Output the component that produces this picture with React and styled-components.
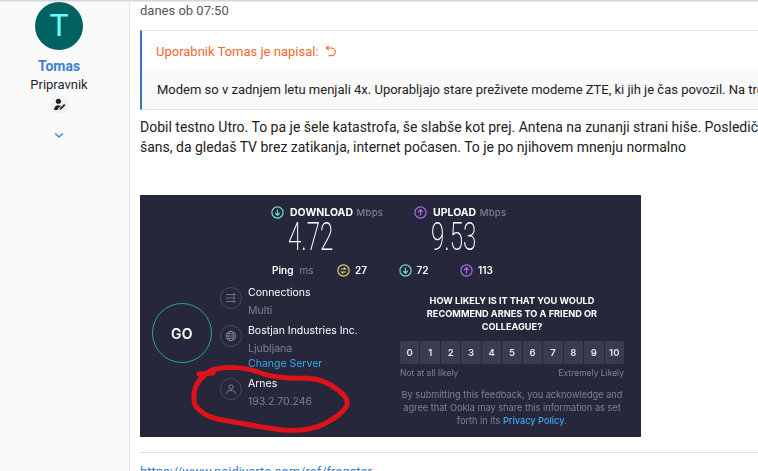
import React from "react";
import styled, { createGlobalStyle } from "styled-components";

const Global = createGlobalStyle`
  html, body {
    margin: 0;
    padding: 0;
    height: 100%;
    overflow: hidden;
    background: #fff;
  }
  body {
    font-family: Roboto, "Liberation Sans", sans-serif;
    font-size: 14px;
    color: #222;
  }
`;

const Page = styled.div`
  display: flex;
  width: 758px;
  height: 471px;
  overflow: hidden;
  position: relative;
  &::before {
    content: "";
    position: absolute;
    left: 0;
    right: 0;
    top: 0;
    height: 2px;
    background: linear-gradient(#cfcfcf, #f1f1f1);
    z-index: 2;
  }
`;

const Sidebar = styled.aside`
  flex: 0 0 130px;
  box-sizing: border-box;
  height: 100%;
  background: #fafafa;
  border-right: 1px solid #e0e0e0;
  display: flex;
  flex-direction: column;
  align-items: center;
  padding: 2px 11px 0 0;
`;

const Avatar = styled.div`
  width: 48px;
  height: 48px;
  border-radius: 50%;
  background: #006161;
  color: #66ffff;
  font-size: 32px;
  line-height: 47px;
  text-align: center;
  margin-bottom: 6px;
`;

const Name = styled.div`
  color: #3f7fce;
  font-weight: 700;
  font-size: 14px;
  line-height: 20px;
`;

const Rank = styled.div`
  font-size: 13px;
  line-height: 18px;
  color: #1f2430;
`;

const Badge = styled.div`
  width: 19px;
  height: 19px;
  margin-top: 1px;
  border-radius: 50%;
  background: #f1f1f1;
  display: flex;
  align-items: center;
  justify-content: center;
`;

const Chevron = styled.svg`
  margin-top: 18px;
`;

const Post = styled.main`
  flex: 1;
  min-width: 0;
  padding: 0 0 0 10px;
  overflow: hidden;
`;

const Stamp = styled.div`
  color: #555;
  font-size: 13px;
  line-height: 21px;
  height: 30px;
`;

const Quote = styled.blockquote`
  margin: 0;
  box-sizing: border-box;
  height: 80px;
  border-left: 2px solid #2f74c0;
  border-top: 1px solid #e3e3e3;
  border-bottom: 1px solid #e0e0e0;
`;

const QuoteHead = styled.div`
  display: flex;
  align-items: center;
  gap: 6px;
  height: 40px;
  padding-left: 14px;
  color: #f4682c;
  font-size: 13px;
`;

const QuoteBody = styled.div`
  height: 38px;
  line-height: 37px;
  padding-left: 15px;
  background: #f9f9f9;
  white-space: nowrap;
  font-size: 13px;
  color: #222;
`;

const Body = styled.div`
  margin-top: 7px;
  line-height: 20px;
  white-space: nowrap;
  color: #222;
`;

const Panel = styled.div`
  position: relative;
  width: 501px;
  height: 242px;
  margin-top: 38px;
  background: #26273b;
  color: #fff;
  font-family: Inter, "Open Sans", sans-serif;
  overflow: hidden;
  filter: blur(0.3px);
`;

const Speeds = styled.div`
  display: grid;
  grid-template-columns: 143px 143px;
  padding: 11px 0 0 131px;
`;

const SpeedHead = styled.div`
  display: flex;
  align-items: center;
  gap: 6px;
  font-size: 10.5px;
  font-weight: 700;
  line-height: 13px;
  white-space: nowrap;
`;

const Unit = styled.span`
  color: #7f8095;
  font-size: 9.5px;
  font-weight: 500;
  letter-spacing: 0.3px;
  margin-left: 1px;
`;

const SpeedValue = styled.div`
  font-family: Roboto, sans-serif;
  font-weight: 200;
  font-size: 39px;
  line-height: 38px;
  margin: -1px 0 0 17px;
  width: 48px;
  transform: scaleX(0.62);
  transform-origin: left center;
`;

const PingRow = styled.div`
  display: flex;
  align-items: center;
  height: 14px;
  margin-top: 7px;
  padding-left: 132px;
  font-size: 10px;
  font-weight: 600;
`;

const PingLabel = styled.span`
  width: 65px;
  white-space: nowrap;
  & > i {
    font-style: normal;
    font-weight: 400;
    color: #7f8095;
    margin-left: 6px;
  }
`;

const PingItem = styled.span`
  display: flex;
  align-items: center;
  gap: 5px;
  width: 61.5px;
`;

const Lower = styled.div`
  display: flex;
  margin-top: 7px;
`;

const GoCol = styled.div`
  flex: 0 0 80px;
  padding: 19px 0 0 12px;
  box-sizing: border-box;
`;

const GoButton = styled.div`
  width: 60px;
  height: 60px;
  box-sizing: border-box;
  border-radius: 50%;
  border: 1px solid #2f9dab;
  display: flex;
  align-items: center;
  justify-content: center;
  font-size: 14px;
  font-weight: 600;
  letter-spacing: 0.3px;
`;

const ServerCol = styled.div`
  flex: 0 0 180px;
  font-size: 10.5px;
`;

const ServerRow = styled.div`
  display: flex;
  gap: 6px;
  margin-bottom: ${(p) => p.$gap}px;
`;

const IconRing = styled.div`
  flex: 0 0 22px;
  width: 22px;
  height: 22px;
  margin-top: 3px;
  box-sizing: border-box;
  border: 1px solid #4a4b60;
  border-radius: 50%;
  display: flex;
  align-items: center;
  justify-content: center;
`;

const ServerLine = styled.div`
  line-height: ${(p) => p.$lh || 18}px;
  color: ${(p) => p.$color || "#fff"};
  white-space: nowrap;
`;

const SurveyCol = styled.div`
  width: 224px;
  padding-top: 10px;
  text-align: center;
`;

const Question = styled.div`
  font-size: 9.2px;
  font-weight: 700;
  line-height: 13px;
  white-space: nowrap;
`;

const Scores = styled.div`
  display: grid;
  grid-template-columns: repeat(11, 1fr);
  gap: 1px;
  margin-top: 8px;
`;

const Score = styled.div`
  height: 23px;
  line-height: 23px;
  background: #3a3b4e;
  font-size: 9.5px;
  font-weight: 600;
  color: #e8e8ee;
  &:first-child {
    border-radius: 2px 0 0 2px;
  }
  &:last-child {
    border-radius: 0 2px 2px 0;
  }
`;

const ScaleLabels = styled.div`
  display: flex;
  justify-content: space-between;
  margin-top: 4px;
  font-size: 8.5px;
  line-height: 10px;
  color: #7f8095;
`;

const Disclaimer = styled.div`
  margin-top: 10px;
  font-size: 9.2px;
  line-height: 13px;
  color: #7f8095;
  white-space: nowrap;
  & > a {
    color: #3ba7ec;
    font-weight: 500;
  }
`;

const Scribble = styled.svg`
  position: absolute;
  left: 0;
  top: 0;
  pointer-events: none;
`;

const Rule = styled.hr`
  border: 0;
  border-top: 1px solid #e0e0e0;
  margin: 15px 0 0;
`;

const Signature = styled.a`
  display: block;
  margin-top: 9px;
  line-height: 20px;
  font-size: 13px;
  color: #3f7fce;
  text-decoration: underline;
`;

const Arrow = ({ color, up }) => (
  <svg width="13" height="13" viewBox="0 0 13 13" fill="none" stroke={color} strokeWidth="1.2">
    <circle cx="6.5" cy="6.5" r="5.6" />
    {up ? <path d="M6.5 9.5V3.8M4.2 6l2.3-2.3L8.8 6" /> : <path d="M6.5 3.5v5.7M4.2 7l2.3 2.3L8.8 7" />}
  </svg>
);

const Latency = () => (
  <svg width="13" height="13" viewBox="0 0 13 13" fill="none" stroke="#e3cf6a" strokeWidth="1.2">
    <circle cx="6.5" cy="6.5" r="5.6" />
    <path d="M3.8 5h4.6L6.8 3.4M9.2 8H4.6l1.6 1.6" />
  </svg>
);

const scores = [0, 1, 2, 3, 4, 5, 6, 7, 8, 9, 10];

export default function App() {
  return (
    <Page>
      <Global />
      <Sidebar>
        <Avatar>T</Avatar>
        <Name>Tomas</Name>
        <Rank>Pripravnik</Rank>
        <Badge>
          <svg width="13" height="13" viewBox="0 0 12 12" fill="#222">
            <circle cx="5" cy="3" r="2.4" />
            <path d="M1 11c0-3 1.5-4.4 4-4.4 1 0 1.7.2 2.3.6L4.6 10l-.3 1z" />
            <path d="M6 10.8l.3-1.5 4-3.7 1.2 1.2-4 3.7z" />
          </svg>
        </Badge>
        <Chevron width="10" height="7" viewBox="0 0 10 7" fill="none" stroke="#3f8ad6" strokeWidth="1.6">
          <path d="M1.2 1.5L5 5l3.8-3.5" />
        </Chevron>
      </Sidebar>
      <Post>
        <Stamp>danes ob 07:50</Stamp>
        <Quote>
          <QuoteHead>
            Uporabnik Tomas je napisal:
            <svg width="12" height="12" viewBox="0 0 12 12" fill="none" stroke="#f4682c" strokeWidth="1.2">
              <path d="M3.5 1L1.6 3l2 2M1.8 3h4.7a3.2 3.2 0 0 1 0 7.6H3.6" />
            </svg>
          </QuoteHead>
          <QuoteBody>
            Modem so v zadnjem letu menjali 4x. Uporabljajo stare preživete modeme ZTE, ki jih je čas povozil. Na trgu
          </QuoteBody>
        </Quote>
        <Body>
          Dobil testno Utro. To pa je šele katastrofa, še slabše kot prej. Antena na zunanji strani hiše. Posledično
          <br />
          šans, da gledaš TV brez zatikanja, internet počasen. To je po njihovem mnenju normalno
        </Body>
        <Panel>
          <Speeds>
            <div>
              <SpeedHead>
                <Arrow color="#6fdcd2" />
                <span>DOWNLOAD <Unit>Mbps</Unit></span>
              </SpeedHead>
              <SpeedValue>4.72</SpeedValue>
            </div>
            <div>
              <SpeedHead>
                <Arrow color="#a76ee8" up />
                <span>UPLOAD <Unit>Mbps</Unit></span>
              </SpeedHead>
              <SpeedValue>9.53</SpeedValue>
            </div>
          </Speeds>
          <PingRow>
            <PingLabel>Ping<i>ms</i></PingLabel>
            <PingItem><Latency />27</PingItem>
            <PingItem><Arrow color="#6fdcd2" />72</PingItem>
            <PingItem><Arrow color="#a76ee8" up />113</PingItem>
          </PingRow>
          <Lower>
            <GoCol>
              <GoButton>GO</GoButton>
            </GoCol>
            <ServerCol>
              <ServerRow $gap={2}>
                <IconRing>
                  <svg width="12" height="10" viewBox="0 0 12 10" fill="none" stroke="#77788c" strokeWidth="0.9">
                    <path d="M1 1.5h9M8.5 0l1.5 1.5L8.5 3M1 5h9M8.5 3.5L10 5 8.5 6.5M1 8.5h9M8.5 7l1.5 1.5L8.5 10" />
                  </svg>
                </IconRing>
                <div>
                  <ServerLine>Connections</ServerLine>
                  <ServerLine $color="#7f8095">Multi</ServerLine>
                </div>
              </ServerRow>
              <ServerRow $gap={5}>
                <IconRing>
                  <svg width="12" height="12" viewBox="0 0 12 12" fill="none" stroke="#8a8b9e" strokeWidth="0.8">
                    <circle cx="6" cy="6" r="4.8" />
                    <ellipse cx="6" cy="6" rx="2.2" ry="4.8" />
                    <path d="M1.2 6h9.6M1.8 3.6h8.4M1.8 8.4h8.4" />
                  </svg>
                </IconRing>
                <div>
                  <ServerLine>Bostjan Industries Inc.</ServerLine>
                  <ServerLine $color="#7f8095" $lh={17}>Ljubljana</ServerLine>
                  <ServerLine $color="#3ba7ec" $lh={13}>Change Server</ServerLine>
                </div>
              </ServerRow>
              <ServerRow $gap={0}>
                <IconRing>
                  <svg width="12" height="12" viewBox="0 0 12 12" fill="none" stroke="#8a8b9e" strokeWidth="0.9">
                    <circle cx="6" cy="4" r="2.2" />
                    <path d="M1.5 10.8c.4-2.4 2-3.4 4.5-3.4s4.1 1 4.5 3.4" />
                  </svg>
                </IconRing>
                <div>
                  <ServerLine>Arnes</ServerLine>
                  <ServerLine $color="#7f8095">193.2.70.246</ServerLine>
                </div>
              </ServerRow>
            </ServerCol>
            <SurveyCol>
              <Question>
                HOW LIKELY IS IT THAT YOU WOULD
                <br />
                RECOMMEND ARNES TO A FRIEND OR
                <br />
                COLLEAGUE?
              </Question>
              <Scores>
                {scores.map((n) => (
                  <Score key={n}>{n}</Score>
                ))}
              </Scores>
              <ScaleLabels>
                <span>Not at all likely</span>
                <span>Extremely Likely</span>
              </ScaleLabels>
              <Disclaimer>
                By submitting this feedback, you acknowledge and
                <br />
                agree that Ookla may share this information as set
                <br />
                forth in its <a>Privacy Policy</a>.
              </Disclaimer>
            </SurveyCol>
          </Lower>
          <Scribble width="501" height="242" viewBox="0 0 501 242" fill="none">
            <path
              d="M59 179L73 178M54 205C53 194 58 183 72 175C85 171 105 172 118 177C130 182 150 184 167 183C180 184 191 189 198 195C206 201 209 207 206 212C201 220 193 224 184 229C172 235 155 236 143 235C125 233 105 229 88 226C75 224 65 221 61 216C56 213 54 210 54 205"
              stroke="#de1219"
              strokeWidth="5"
              strokeLinecap="round"
            />
          </Scribble>
        </Panel>
        <Rule />
        <Signature>https://www.najdivarte.com/ref/fragster</Signature>
      </Post>
    </Page>
  );
}
